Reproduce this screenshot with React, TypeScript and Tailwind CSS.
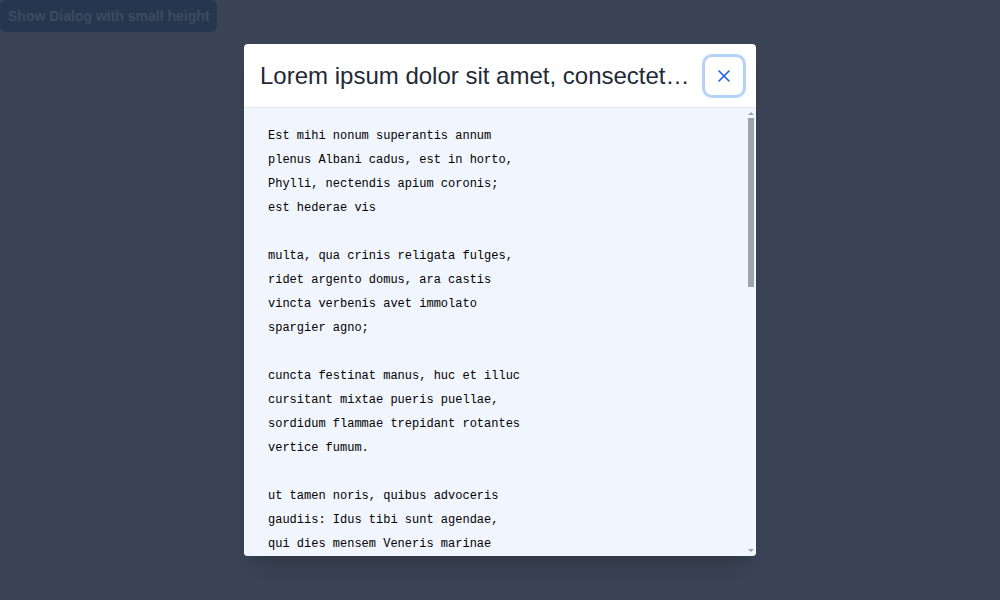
import { X } from 'lucide-react';

const poem = `Est mihi nonum superantis annum
plenus Albani cadus, est in horto,
Phylli, nectendis apium coronis;
est hederae vis

multa, qua crinis religata fulges,
ridet argento domus, ara castis
vincta verbenis avet immolato
spargier agno;

cuncta festinat manus, huc et illuc
cursitant mixtae pueris puellae,
sordidum flammae trepidant rotantes
vertice fumum.

ut tamen noris, quibus advoceris
gaudiis: Idus tibi sunt agendae,
qui dies mensem Veneris marinae
findit Aprilem,

iure sollemnis mihi sanctiorque
paene natali proprio, quod ex hac
luce Maecenas meus adfluentis
ordinat annos.

Telephum, quem tu petis, occupavit
non tuae sortis iuvenem puella
dives et lasciva tenetque grata
compede vinctum.

terret ambustus Phaethon avaras
spes, et exemplum grave praebet ales
Pegasus terrenum equitem gravatus
Bellerophontem,

semper ut te digna sequare et ultra
quam licet sperare nefas putando
disparem vites. age iam, meorum
finis amorum,

(non enim posthac alia calebo
femina) condisce modos, amanda
voce quos reddas; minuentur atrae
carmine curae.`;

const App = () => {
  return (
    <div className="relative h-[600px] w-[1000px] overflow-hidden bg-[#3b4455] font-['Liberation_Sans',Arial,sans-serif]">
      <button className="rounded-md bg-[#26364f] px-2 py-1.5 text-sm font-bold text-[#3e4b60]">
        Show Dialog with small height
      </button>

      {/* dialog */}
      <div className="absolute left-[244px] top-[44px] flex h-[512px] w-[512px] flex-col overflow-hidden rounded-sm bg-white shadow-xl">
        <div className="flex h-[64px] shrink-0 items-center gap-3 border-b border-[#e3e8ef] pl-4 pr-[10px]">
          <h2 className="min-w-0 flex-1 truncate text-2xl text-[#1f2937]">
            Lorem ipsum dolor sit amet, consectetur adipiscing elit, sed do eiusmod tempor
          </h2>
          <button className="flex h-[44px] w-[44px] shrink-0 items-center justify-center rounded-[10px] bg-white ring-[3px] ring-[#b4d2f6] ring-inset">
            <X size={20} strokeWidth={2} className="text-[#2563eb]" />
          </button>
        </div>
        <div className="relative min-h-0 flex-1 bg-[#f1f5fd]">
          <div className="h-full overflow-hidden">
            <pre className="px-6 pb-6 pt-4 font-['Liberation_Mono','Courier_New',monospace] text-xs leading-6 text-black">
              {poem}
            </pre>
          </div>
          {/* scrollbar */}
          <div className="absolute right-0 top-0 flex h-full w-[10px] flex-col items-center py-[3px]">
            <svg width="6" height="4" viewBox="0 0 6 4" className="shrink-0">
              <path d="M0 4 L3 1 L6 4 Z" fill="#9ca3af" />
            </svg>
            <div className="mt-[3px] h-[169px] w-[6px] bg-[#9ca3af]" />
            <div className="flex-1" />
            <svg width="6" height="4" viewBox="0 0 6 4" className="shrink-0">
              <path d="M0 0 L3 3 L6 0 Z" fill="#9ca3af" />
            </svg>
          </div>
        </div>
      </div>
    </div>
  );
};

export default App;
